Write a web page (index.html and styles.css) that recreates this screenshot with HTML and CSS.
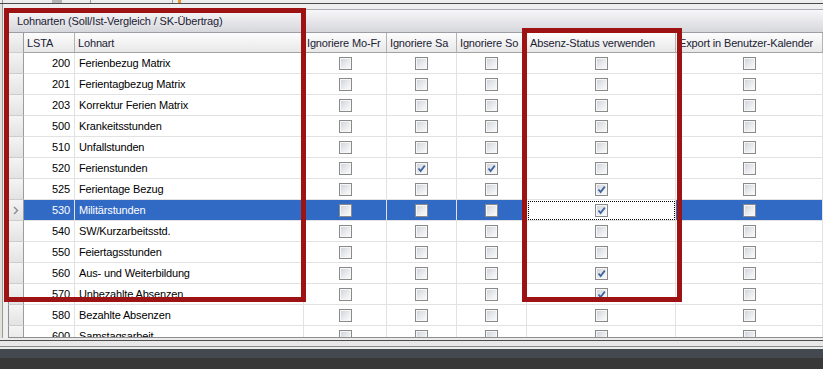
FILE: index.html
```html
<!DOCTYPE html>
<html lang="de">
<head>
  <meta charset="UTF-8">
  <title>Lohnarten</title>
  <link rel="stylesheet" href="styles.css">
</head>
<body>
  <!-- Werkzeugleiste (abgeschnitten) -->
  <div class="toolbar">
    <span class="tbLine first"></span>
    <span class="tbBlock"></span>
    <span class="tbLine l2"></span>
    <span class="tbLine l3"></span>
    <span class="tbMark"></span>
  </div>

  <div class="main">
    <div class="side"></div>
    <div class="panel">
      <div class="panelHead">Lohnarten (Soll/Ist-Vergleich / SK-Übertrag)</div>

      <div class="grid">
        <div class="row hdr">
          <div class="cell rh"></div>
          <div class="cell lsta">LSTA</div>
          <div class="cell txt">Lohnart</div>
          <div class="cell txt">Ignoriere Mo-Fr</div>
          <div class="cell txt">Ignoriere Sa</div>
          <div class="cell txt">Ignoriere So</div>
          <div class="cell txt">Absenz-Status verwenden</div>
          <div class="cell txt">Export in Benutzer-Kalender</div>
        </div>

        <div class="row">
          <div class="cell rh"></div>
          <div class="cell num">200</div>
          <div class="cell name">Ferienbezug Matrix</div>
          <div class="cell chk"><span class="cb"></span></div>
          <div class="cell chk"><span class="cb"></span></div>
          <div class="cell chk"><span class="cb"></span></div>
          <div class="cell chk"><span class="cb"></span></div>
          <div class="cell chk"><span class="cb"></span></div>
        </div>
        <div class="row">
          <div class="cell rh"></div>
          <div class="cell num">201</div>
          <div class="cell name">Ferientagbezug Matrix</div>
          <div class="cell chk"><span class="cb"></span></div>
          <div class="cell chk"><span class="cb"></span></div>
          <div class="cell chk"><span class="cb"></span></div>
          <div class="cell chk"><span class="cb"></span></div>
          <div class="cell chk"><span class="cb"></span></div>
        </div>
        <div class="row">
          <div class="cell rh"></div>
          <div class="cell num">203</div>
          <div class="cell name">Korrektur Ferien Matrix</div>
          <div class="cell chk"><span class="cb"></span></div>
          <div class="cell chk"><span class="cb"></span></div>
          <div class="cell chk"><span class="cb"></span></div>
          <div class="cell chk"><span class="cb"></span></div>
          <div class="cell chk"><span class="cb"></span></div>
        </div>
        <div class="row">
          <div class="cell rh"></div>
          <div class="cell num">500</div>
          <div class="cell name">Krankeitsstunden</div>
          <div class="cell chk"><span class="cb"></span></div>
          <div class="cell chk"><span class="cb"></span></div>
          <div class="cell chk"><span class="cb"></span></div>
          <div class="cell chk"><span class="cb"></span></div>
          <div class="cell chk"><span class="cb"></span></div>
        </div>
        <div class="row">
          <div class="cell rh"></div>
          <div class="cell num">510</div>
          <div class="cell name">Unfallstunden</div>
          <div class="cell chk"><span class="cb"></span></div>
          <div class="cell chk"><span class="cb"></span></div>
          <div class="cell chk"><span class="cb"></span></div>
          <div class="cell chk"><span class="cb"></span></div>
          <div class="cell chk"><span class="cb"></span></div>
        </div>
        <div class="row">
          <div class="cell rh"></div>
          <div class="cell num">520</div>
          <div class="cell name">Ferienstunden</div>
          <div class="cell chk"><span class="cb"></span></div>
          <div class="cell chk"><span class="cb"><svg viewBox="0 0 11 11"><path d="M2.5 5.5 L4.6 8 L8.8 2.6"/></svg></span></div>
          <div class="cell chk"><span class="cb"><svg viewBox="0 0 11 11"><path d="M2.5 5.5 L4.6 8 L8.8 2.6"/></svg></span></div>
          <div class="cell chk"><span class="cb"></span></div>
          <div class="cell chk"><span class="cb"></span></div>
        </div>
        <div class="row">
          <div class="cell rh"></div>
          <div class="cell num">525</div>
          <div class="cell name">Ferientage Bezug</div>
          <div class="cell chk"><span class="cb"></span></div>
          <div class="cell chk"><span class="cb"></span></div>
          <div class="cell chk"><span class="cb"></span></div>
          <div class="cell chk"><span class="cb"><svg viewBox="0 0 11 11"><path d="M2.5 5.5 L4.6 8 L8.8 2.6"/></svg></span></div>
          <div class="cell chk"><span class="cb"></span></div>
        </div>
        <div class="row sel">
          <div class="cell rh"><svg class="arrow" viewBox="0 0 6 9"><path d="M1 1 L4.5 4.5 L1 8"/></svg></div>
          <div class="cell num">530</div>
          <div class="cell name">Militärstunden</div>
          <div class="cell chk"><span class="cb"></span></div>
          <div class="cell chk"><span class="cb"></span></div>
          <div class="cell chk"><span class="cb"></span></div>
          <div class="cell chk focus"><span class="cb"><svg viewBox="0 0 11 11"><path d="M2.5 5.5 L4.6 8 L8.8 2.6"/></svg></span></div>
          <div class="cell chk"><span class="cb"></span></div>
        </div>
        <div class="row">
          <div class="cell rh"></div>
          <div class="cell num">540</div>
          <div class="cell name">SW/Kurzarbeitsstd.</div>
          <div class="cell chk"><span class="cb"></span></div>
          <div class="cell chk"><span class="cb"></span></div>
          <div class="cell chk"><span class="cb"></span></div>
          <div class="cell chk"><span class="cb"></span></div>
          <div class="cell chk"><span class="cb"></span></div>
        </div>
        <div class="row">
          <div class="cell rh"></div>
          <div class="cell num">550</div>
          <div class="cell name">Feiertagsstunden</div>
          <div class="cell chk"><span class="cb"></span></div>
          <div class="cell chk"><span class="cb"></span></div>
          <div class="cell chk"><span class="cb"></span></div>
          <div class="cell chk"><span class="cb"></span></div>
          <div class="cell chk"><span class="cb"></span></div>
        </div>
        <div class="row">
          <div class="cell rh"></div>
          <div class="cell num">560</div>
          <div class="cell name">Aus- und Weiterbildung</div>
          <div class="cell chk"><span class="cb"></span></div>
          <div class="cell chk"><span class="cb"></span></div>
          <div class="cell chk"><span class="cb"></span></div>
          <div class="cell chk"><span class="cb"><svg viewBox="0 0 11 11"><path d="M2.5 5.5 L4.6 8 L8.8 2.6"/></svg></span></div>
          <div class="cell chk"><span class="cb"></span></div>
        </div>
        <div class="row">
          <div class="cell rh"></div>
          <div class="cell num">570</div>
          <div class="cell name">Unbezahlte Absenzen</div>
          <div class="cell chk"><span class="cb"></span></div>
          <div class="cell chk"><span class="cb"></span></div>
          <div class="cell chk"><span class="cb"></span></div>
          <div class="cell chk"><span class="cb"><svg viewBox="0 0 11 11"><path d="M2.5 5.5 L4.6 8 L8.8 2.6"/></svg></span></div>
          <div class="cell chk"><span class="cb"></span></div>
        </div>
        <div class="row">
          <div class="cell rh"></div>
          <div class="cell num">580</div>
          <div class="cell name">Bezahlte Absenzen</div>
          <div class="cell chk"><span class="cb"></span></div>
          <div class="cell chk"><span class="cb"></span></div>
          <div class="cell chk"><span class="cb"></span></div>
          <div class="cell chk"><span class="cb"></span></div>
          <div class="cell chk"><span class="cb"></span></div>
        </div>
        <div class="row">
          <div class="cell rh"></div>
          <div class="cell num">600</div>
          <div class="cell name">Samstagsarbeit</div>
          <div class="cell chk"><span class="cb"></span></div>
          <div class="cell chk"><span class="cb"></span></div>
          <div class="cell chk"><span class="cb"></span></div>
          <div class="cell chk"><span class="cb"></span></div>
          <div class="cell chk"><span class="cb"></span></div>
        </div>
      </div>
    </div>
  </div>

  <div class="foot"><div class="footBar"></div></div>
  <div class="dark1"></div>
  <div class="dark2"></div>

  <!-- Markierungen -->
  <div class="mark markA"></div>
  <div class="mark markB"></div>
</body>
</html>
```

FILE: styles.css
```css
html, body {
  margin: 0;
}

body {
  position: relative;
  width: 823px;
  height: 369px;
  overflow: hidden;
  background-color: #ececec;
  font-family: "Liberation Sans", Arial, sans-serif;
  font-size: 11px;
  letter-spacing: -0.15px;
  color: #000;
}

.toolbar {
  display: flex;
  height: 3px;
  background-color: #ededed;
  border-bottom: 1px solid #4a4a4a;
}

.tbLine {
  width: 1px;
  background-color: #9a9a9a;
}

.tbLine.first {
  margin-left: 2px;
}

.tbBlock {
  width: 10px;
  margin-left: 49px;
  background-color: #b4b4b4;
}

.tbLine.l2 {
  margin-left: 28px;
}

.tbLine.l3 {
  margin-left: 81px;
}

.tbMark {
  width: 3px;
  margin-left: 5px;
  background-color: #e39a2a;
}

.main {
  display: flex;
  height: 334px;
}

.side {
  width: 3px;
  box-sizing: border-box;
  background-color: #e4e1da;
  border-right: 1px solid #9a9a9a;
}

.panel {
  flex: 1;
  padding: 5px 0 0 5px;
  background-color: #efefef;
}

.panelHead {
  height: 24px;
  box-sizing: border-box;
  padding-left: 9px;
  line-height: 22px;
  color: #1a2233;
  background: linear-gradient(#f7f7f9, #d6d7dc);
  border-top: 1px solid #a9abb0;
  border-bottom: 1px solid #9c9ea3;
  white-space: nowrap;
}

.grid {
  height: 305px;
  box-sizing: border-box;
  overflow: hidden;
  background-color: #fff;
  border-bottom: 1px solid #8e8e8e;
}

.row {
  display: grid;
  grid-template-columns: 16px 51px 229px 83px 70px 70px 149px 147px;
  height: 21px;
}

.cell {
  display: flex;
  align-items: center;
  box-sizing: border-box;
  overflow: hidden;
  white-space: nowrap;
  border-right: 1px solid #e2e2e2;
  border-bottom: 1px solid #e2e2e2;
}

.hdr {
  height: 20px;
}

.hdr .cell {
  color: #1a2233;
  background: linear-gradient(#fdfdfd, #e8e8e8);
  border-right: 1px solid #b3b3b3;
  border-bottom: 1px solid #a3a3a3;
}

.hdr .lsta {
  padding-left: 3px;
}

.hdr .txt {
  padding-left: 3px;
}

.cell.rh {
  background: linear-gradient(#f4f4f4, #e3e3e3);
  border-left: 1px solid #8f8f8f;
  border-right: 1px solid #9c9c9c;
  border-bottom: 1px solid #cdcdcd;
  justify-content: center;
}

.num {
  justify-content: flex-end;
  padding-right: 4px;
}

.name {
  padding-left: 4px;
}

.chk {
  justify-content: center;
}

.cb {
  display: block;
  width: 13px;
  height: 13px;
  box-sizing: border-box;
  border: 1px solid #8a8a8a;
  background: linear-gradient(135deg, #cdd1d9 0%, #e9ebee 55%, #fdfdfd 100%);
  box-shadow: inset 0 0 0 1px #f6f6f6;
}

.cb svg {
  display: block;
  width: 11px;
  height: 11px;
}

.cb path {
  fill: none;
  stroke: #41639f;
  stroke-width: 1.8;
}

.arrow {
  width: 6px;
  height: 9px;
}

.arrow path {
  fill: none;
  stroke: #8a8a8a;
  stroke-width: 1.4;
}

.sel .cell:not(.rh) {
  background-color: #316ac5;
  color: #fff;
}

.sel .cell.focus {
  background-color: #fff;
  outline: 1px dotted #000;
  outline-offset: -2px;
}

.foot {
  height: 11px;
  box-sizing: border-box;
  padding: 2px 0;
  background-color: #ebebeb;
}

.footBar {
  height: 7px;
  box-sizing: border-box;
  border-top: 1px solid #4d4d4d;
  border-bottom: 1px solid #8a8a8a;
  background-color: #e8e8e8;
}

.dark1 {
  height: 9px;
  background-color: #44484f;
}

.dark2 {
  height: 11px;
  background-color: #383838;
}

.mark {
  position: absolute;
  box-sizing: border-box;
  border: 5px solid #9d1212;
  pointer-events: none;
}

.markA {
  left: 4px;
  top: 8px;
  width: 302px;
  height: 294px;
}

.markB {
  left: 522px;
  top: 28px;
  width: 160px;
  height: 274px;
}
```
